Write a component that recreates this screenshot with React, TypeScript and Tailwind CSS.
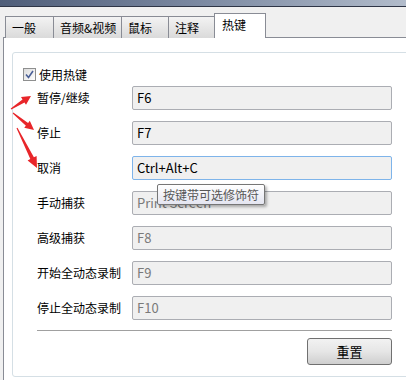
import React from "react";

const font = { fontFamily: '"Noto Sans CJK SC", "Noto Sans", sans-serif' };

const tabs = ["一般", "音频&视频", "鼠标", "注释"];
const tabWidths = ["w-[49px]", "w-[69px]", "w-[48px]", "w-[47px]"];

const rows = [
  { label: "暂停/继续", value: "F6", enabled: true },
  { label: "停止", value: "F7", enabled: true },
  { label: "取消", value: "Ctrl+Alt+C", enabled: true, focused: true },
  { label: "手动捕获", value: "Print Screen", enabled: false },
  { label: "高级捕获", value: "F8", enabled: false },
  { label: "开始全动态录制", value: "F9", enabled: false },
  { label: "停止全动态录制", value: "F10", enabled: false },
];

// red annotation arrows drawn over the labels
const Arrows = () => (
  <svg className="absolute left-0 top-0 pointer-events-none" width="60" height="180" viewBox="0 0 60 180">
    <polygon points="10.7,108.6 22.5,99.4 21,97.1 31,96 26,104.7 24.5,102.4 11.3,109.4" fill="#e8262a" />
    <polygon points="13.3,112.6 28.1,122.9 29.8,120.8 34,130 24.2,127.8 25.9,125.7 12.7,113.4" fill="#e8262a" />
    <polygon points="17.5,127.7 33.9,157.3 36.6,156 37,168 27.6,160.4 30.3,159.1 16.5,128.3" fill="#e8262a" />
  </svg>
);

export default function App() {
  return (
    <div className="relative w-[406px] h-[380px] overflow-hidden bg-[#f0f0f0] text-[12px] text-black" style={font}>
      <div className="h-[7px] bg-gradient-to-r from-[#4f5e79] via-[#7c8aa2] to-[#b2bccb] border-b border-[#2e3546]" />

      <div className="flex items-end pl-[5px] mt-[6px] h-[25px] relative z-10">
        {tabs.map((t, i) => (
          <div
            key={t}
            className={`${tabWidths[i]} h-[22px] -ml-px first:ml-0 border border-b-0 border-[#898c95] bg-gradient-to-b from-[#f3f3f3] to-[#dadada] flex items-center pl-[6px] leading-none`}
          >
            {t}
          </div>
        ))}
        <div className="w-[52px] h-[25px] -ml-px border border-b-0 border-[#898c95] bg-white flex items-center pl-[7px] leading-none pb-[2px]">
          热键
        </div>
      </div>

      <div className="ml-[3px] -mt-px h-[400px] border-l border-t border-[#898c95] bg-white pl-[8px] pt-[14px]">
        <div className="w-[420px] h-[325px] border border-[#d5dfe5] rounded-[3px] relative">
          <div className="flex items-center gap-[3px] pl-[10px] pt-[10px] h-[33px]">
            <div className="w-[13px] h-[13px] border border-[#8e8f8f] bg-gradient-to-br from-[#dcdcdc] to-white flex items-center justify-center">
              <svg width="9" height="9" viewBox="0 0 9 9">
                <path d="M1 4.5 L3.5 7.5 L8 1" stroke="#4a5f97" strokeWidth="1.6" fill="none" />
              </svg>
            </div>
            <span className="leading-none">使用热键</span>
          </div>

          <div className="flex flex-col gap-[11px] pl-[24px] w-[379px]">
            {rows.map((r) => (
              <div key={r.label} className="flex items-center h-[24px]">
                <span className="w-[95px] leading-none">{r.label}</span>
                <div
                  className={`flex-1 h-[24px] rounded-[2px] border bg-[#f0f0f0] flex items-center pl-[4px] text-[13px] ${
                    r.focused ? "border-[#7eb4ea]" : "border-[#abadb3]"
                  } ${r.enabled ? "text-black" : "text-[#7a7a7a]"}`}
                >
                  {r.value}
                </div>
              </div>
            ))}
          </div>

          <div className="ml-[24px] w-[355px] mt-[10px] border-t border-[#a0a0a0]" />

          <div className="flex w-[379px] justify-end mt-[7px]">
            <button className="w-[85px] h-[27px] rounded-[3px] border border-[#707070] bg-gradient-to-b from-[#f2f2f2] via-[#e6e6e6] to-[#cfcfcf] text-[13px] leading-none">
              重置
            </button>
          </div>
        </div>
      </div>

      <div className="absolute left-[157px] top-[184px] w-[108px] h-[21px] border border-[#767676] rounded-[2px] bg-gradient-to-b from-white to-[#e4e5f0] shadow-[2px_2px_3px_rgba(0,0,0,0.3)] flex items-center justify-center text-[#575757] leading-none">
        按键带可选修饰符
      </div>

      <Arrows />
    </div>
  );
}
